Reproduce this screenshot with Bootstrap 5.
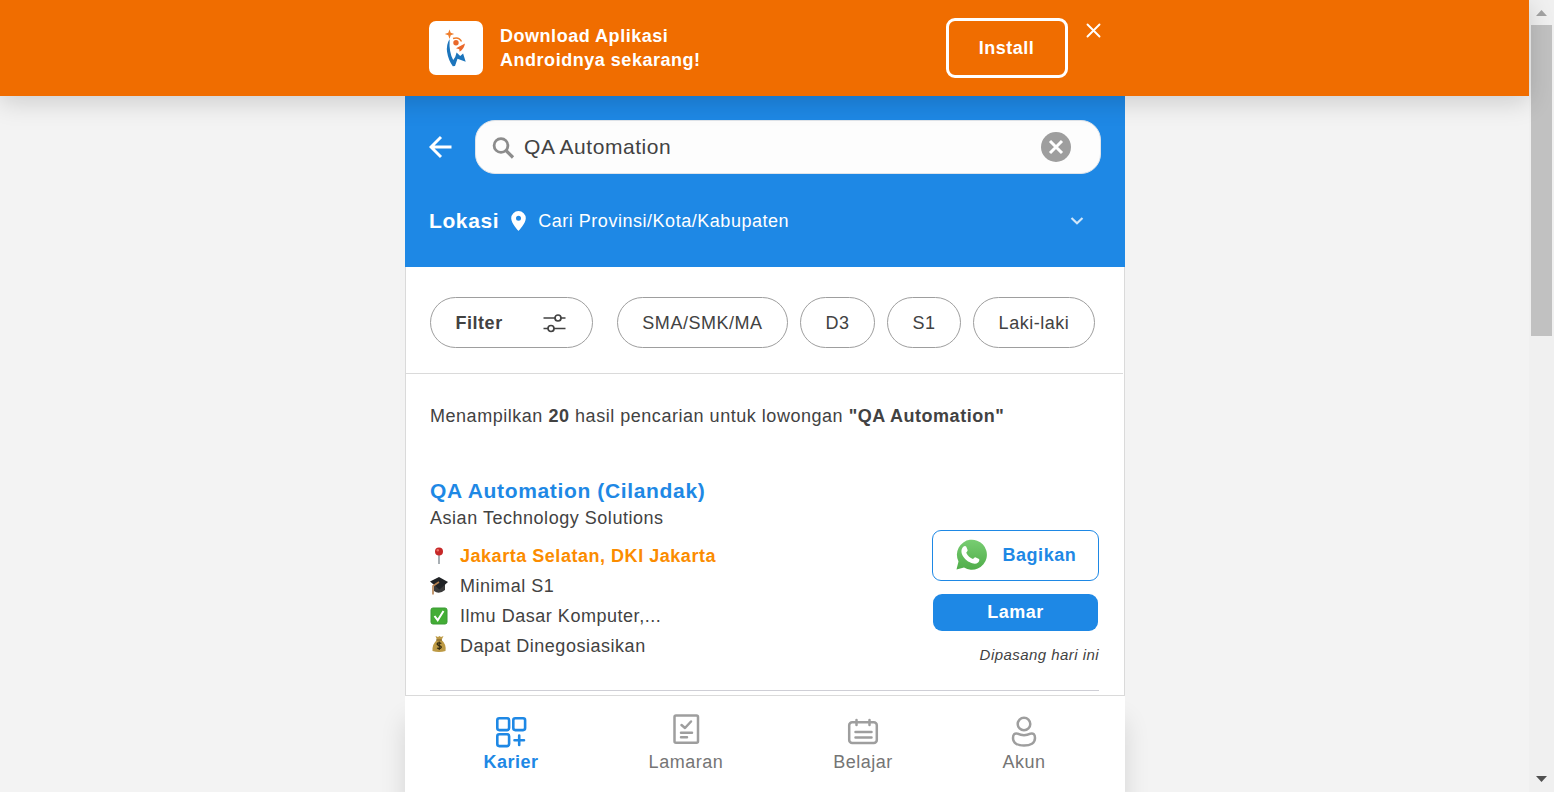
<!DOCTYPE html>
<html lang="id">
<head>
<meta charset="utf-8">
<meta name="viewport" content="width=device-width, initial-scale=1">
<title>QA Automation</title>
<link href="https://cdn.jsdelivr.net/npm/bootstrap@5.3.0/dist/css/bootstrap.min.css" rel="stylesheet">
<style>
  body { font-family: "Liberation Sans", Arial, sans-serif; font-size: 18px; line-height: 24px; letter-spacing: .53px; color: #424242; background: #f3f3f3; }
  svg { display: block; flex: none; }
  .viewport { height: 792px; }
  .promo { height: 96px; background: #f06d00; box-shadow: 0 6px 24px rgba(0,0,0,.16); z-index: 3; }
  .promo-inner, .phone { width: 720px; }
  .center-pad { padding-left: 1px; }
  .logo-tile { width: 54px; height: 54px; border-radius: 7px; margin: 21px 0 0 24px; }
  .promo-text { margin: 24px 0 0 17px; }
  .install { width: 122px; height: 60px; border: 3px solid #fff; border-radius: 9px; margin: 18px 0 0 auto; padding-right: 1px; }
  .close-x { margin: 22px 23px 0 17px; }
  .hero { height: 171px; background: #1e88e5; padding: 24px 24px 0; }
  .search { width: 626px; height: 54px; border-radius: 20px; background: #fdfdfd; border: 1px solid #dfe4ea; padding: 0 29px 0 15px; margin-left: 23px; }
  .search-term { font-size: 21px; letter-spacing: .55px; margin-left: 9px; }
  .search-term { color: #424242; }
  .place { height: 24px; margin-top: 35px; }
  .place-label { font-size: 21px; letter-spacing: .6px; }
  .place-pin { margin: 0 12px; }
  .place-caret { margin-right: 17px; }
  .sheet { height: 429px; border: 1px solid #dadada; border-top: 0; background: #fff; }
  .filters { height: 107px; padding: 30px 0 0 24px; border-bottom: 1px solid #dadada; margin-right: 1px; }
  .pill { height: 51px; border: 1px solid #9e9e9e; border-radius: 26px; margin-right: 12px; }
  .results { padding: 30px 25px 0 24px; }
  .job { margin-top: 50px; height: 213px; border-bottom: 1px solid #cfcfd6; }
  .job-title { font-size: 21px; line-height: 26px; color: #1e88e5; letter-spacing: .65px; }
  .fact { height: 30px; gap: 12px; }
  .orange { color: #fb8c00; }
  .share { width: 167px; height: 51px; border: 1px solid #1e88e5; border-radius: 9px; color: #1e88e5; padding: 0 0 2px 20px; margin-top: 52px; }
  .apply { width: 165px; height: 37px; border-radius: 9px; background: #1e88e5; margin: 13px 1px 0 0; padding-bottom: 2px; }
  .posted { font-size: 15px; letter-spacing: .45px; margin-top: 12px; }
  .tabs { height: 96px; background: #fff; color: #757575; box-shadow: 0 24px 24px rgba(0,0,0,.12); z-index: 2; padding-top: 16px; }
  .tab { line-height: 24px; }
  .tab svg { height: 38px; margin-left: -1px; }
  .scroller { width: 25px; background: #f0f0f0; padding: 0 2px 0 2px; }
  .arrow { height: 25px; }
  .thumb { height: 311px; background: #c1c1c1; }
</style>
</head>
<body class="overflow-hidden">
<div class="viewport d-flex">
  <div class="flex-grow-1 d-flex flex-column">
    <header class="promo center-pad d-flex justify-content-center position-relative">
      <div class="promo-inner d-flex align-items-start text-white fw-bold">
        <div class="logo-tile bg-white">
          <svg width="54" height="54" viewBox="0 0 54 54">
            <path d="M20.500 8.500l1.200 3.200 3.500 1.300-3.500 1.300-1.200 3.700-1.200-3.700-3.500-1.300 3.500-1.300z" fill="#ef7d2b"/>
            <path d="M24 17.500q6-2 8.500 3" fill="none" stroke="#ef7d2b" stroke-width="1.500"/>
            <circle cx="27" cy="21.800" r="2.700" fill="#e9682c"/>
            <path d="M36 22.500l-9 4.800 3.300.9.300 2.600q4.400-2.500 5.400-8.300z" fill="#e9682c"/>
            <path d="M20.300 18.500q-3.200 5.500-2.200 12.500 1.200 8 5.700 14.300l2.200-.4 2.500-7.200 8.200 3-2.600-8.200-2.900 2.500-3.600-3.500q-1 5-3.400 7.500-4.300-7.500-3.600-20.500z" fill="#1c75bc"/>
          </svg>
        </div>
        <div class="promo-text">Download Aplikasi<br>Androidnya sekarang!</div>
        <div class="install d-flex align-items-center justify-content-center">Install</div>
        <svg class="close-x" width="17" height="17" viewBox="0 0 17 17" stroke="#fff" stroke-width="1.900" stroke-linecap="round"><path d="M2.500 2.500l12 12M14.500 2.500l-12 12"/></svg>
      </div>
    </header>
    <main class="center-pad d-flex justify-content-center">
      <div class="phone">
        <section class="hero text-white">
          <div class="d-flex align-items-center">
            <svg width="23" height="24" viewBox="0 0 23 24" fill="none" stroke="#fff" stroke-width="2.900"><path d="M22.500 12H2M12 2L2 12l10 10"/></svg>
            <div class="search d-flex align-items-center">
              <svg width="24" height="24" viewBox="0 0 24 24" fill="none" stroke="#8c8c8c"><circle cx="10" cy="10.500" r="6.900" stroke-width="2.800"/><path d="M15 15.500l7 7" stroke-width="3.200"/></svg>
              <span class="search-term">QA Automation</span>
              <svg class="ms-auto" width="30" height="30" viewBox="0 0 30 30"><circle cx="15" cy="15" r="15" fill="#9e9e9e"/><path d="M9 9l12 12M21 9L9 21" stroke="#fff" stroke-width="3"/></svg>
            </div>
          </div>
          <div class="place d-flex align-items-center">
            <span class="place-label fw-bold">Lokasi</span>
            <svg class="place-pin" width="15" height="20" viewBox="0 0 15 20"><path d="M7.500 0A7.300 7.300 0 0 0 .2 7.300C.2 12.500 7.500 20 7.500 20s7.300-7.500 7.300-12.700A7.300 7.300 0 0 0 7.500 0zm0 4.800a2.500 2.500 0 1 1 0 5 2.500 2.500 0 0 1 0-5z" fill="#fff" fill-rule="evenodd"/></svg>
            <span>Cari Provinsi/Kota/Kabupaten</span>
            <svg class="place-caret ms-auto" width="14" height="10" viewBox="0 0 14 10" fill="none" stroke="#cfe6fa" stroke-width="2.200"><path d="M1.500 2l5.500 5.200L12.500 2"/></svg>
          </div>
        </section>
        <section class="sheet">
          <div class="filters d-flex">
            <div class="pill d-flex align-items-center fw-bold" style="width:163px;margin-right:24px;padding-left:24.5px">Filter
              <svg style="margin-left:40.500px" width="23" height="20" viewBox="0 0 23 20" fill="none" stroke="#424242" stroke-width="1.700"><path d="M.5 5h11.500M18 5h4.500M.5 15.500H5M11 15.500h11.500"/><circle cx="15" cy="5" r="3"/><circle cx="8" cy="15.500" r="3"/></svg>
            </div>
            <div class="pill d-flex align-items-center justify-content-center" style="width:171px">SMA/SMK/MA</div>
            <div class="pill d-flex align-items-center justify-content-center" style="width:75px">D3</div>
            <div class="pill d-flex align-items-center justify-content-center" style="width:74px">S1</div>
            <div class="pill d-flex align-items-center justify-content-center" style="width:122px">Laki-laki</div>
          </div>
          <div class="results">
            <div class="text-nowrap">Menampilkan <b>20</b> hasil pencarian untuk lowongan <b>"QA Automation"</b></div>
            <article class="job d-flex justify-content-between">
              <div>
                <div class="job-title fw-bold">QA Automation (Cilandak)</div>
                <div style="line-height:28px">Asian Technology Solutions</div>
                <div style="margin-top:9px">
                  <div class="fact d-flex align-items-center orange fw-bold">
                    <svg width="18" height="18" viewBox="0 0 18 18"><path d="M9 6v11" stroke="#8c949b" stroke-width="1.500"/><circle cx="9" cy="4.500" r="4" fill="#c62828"/><circle cx="7.800" cy="3.200" r="1.200" fill="#ef7065"/></svg>Jakarta Selatan, DKI Jakarta</div>
                  <div class="fact d-flex align-items-center">
                    <svg width="18" height="18" viewBox="0 0 18 18"><path d="M4 7v7q5 4 11-1V7z" fill="#3a3a3a"/><path d="M9 0l9 5-8.500 7.500L0 4.500z" fill="#202326"/><path d="M9 5L3 9v8.500" fill="none" stroke="#b58150" stroke-width="1.600"/></svg>Minimal S1</div>
                  <div class="fact d-flex align-items-center">
                    <svg width="18" height="18" viewBox="0 0 18 18"><rect x="1" y="1" width="16" height="16" rx="2" fill="#43ad35" stroke="#3a9a34"/><path d="M4.500 9l3.200 4.200L13.500 4" fill="none" stroke="#fff" stroke-width="2"/></svg>Ilmu Dasar Komputer,...</div>
                  <div class="fact d-flex align-items-center">
                    <svg style="margin-top:-4px" width="18" height="18" viewBox="0 0 18 18"><path d="M5.500 1l2.500 1 1.500-1L11 2l2.500-1-2 4q5 4 4 11-6.500 2-13 0Q2 9 7 5z" fill="#bd9a45"/><path d="M6 5h6" stroke="#765b20"/><path d="M11.300 8.500q-2-1.300-3.800-.4-1 1.300.8 2.200 3 .5 3 2-1 2.200-4.300.7M9.200 6.500v8.500" fill="none" stroke="#31290f" stroke-width="1.200"/></svg>Dapat Dinegosiasikan</div>
                </div>
              </div>
              <div class="d-flex flex-column align-items-end">
                <div class="share fw-bold d-flex align-items-center">
                  <svg width="34" height="34" viewBox="0 0 34 34">
                    <defs><linearGradient id="leaf" x2="0" y2="1"><stop stop-color="#78cd72"/><stop offset="1" stop-color="#50ad4a"/></linearGradient></defs>
                    <path d="M3.500 31.500l2-8A15 15 0 1 1 11 29.500z" fill="url(#leaf)"/>
                    <path d="M10.600 8.500c.8-.7 2.200-.8 2.700.3l1.300 3.100c.3.700-.7 2-1.400 2.800 1.700 3.300 3.800 5 6.800 6.300.8-.8 1.500-2 2.300-1.800l3.700 1.800c.8.500.1 2.700-.9 3.600-2.200 1.900-5.300 1.400-8.700-.5-3.300-1.900-7-5.700-7.800-9.200-.5-2.500.2-4.800 2-6.400z" fill="#fff"/>
                  </svg><span style="margin-left:15.500px">Bagikan</span></div>
                <div class="apply text-white fw-bold d-flex align-items-center justify-content-center">Lamar</div>
                <div class="posted fst-italic">Dipasang hari ini</div>
              </div>
            </article>
          </div>
        </section>
        <nav class="tabs d-flex position-relative">
          <div class="tab fw-bold d-flex flex-column align-items-center" style="margin-left:78px;width:56px;color:#1e88e5">
            <svg width="32" viewBox="0 0 32 38" fill="none" stroke="#1e88e5" stroke-width="2.600" stroke-linecap="round"><rect x="2.300" y="6.300" width="11.800" height="11.800" rx="2"/><rect x="18.300" y="6.300" width="11.800" height="11.800" rx="2"/><rect x="2.300" y="22.300" width="11.800" height="11.800" rx="2"/><path d="M19.500 28.200h9.500M24.200 23.500v9.500"/></svg>Karier</div>
          <div class="tab d-flex flex-column align-items-center" style="margin-left:109px;width:76px">
            <svg width="28" viewBox="0 0 28 38" fill="none" stroke="#9e9e9e" stroke-width="2.500" stroke-linecap="round" stroke-linejoin="round"><rect x="2.500" y="3.500" width="23.500" height="27.200" rx="1.500"/><path d="M9.500 13l3.500 3 6-6.500M9 20.700h11M9 25.200h6"/></svg>Lamaran</div>
          <div class="tab d-flex flex-column align-items-center" style="margin-left:108px;width:62px">
            <svg width="32" viewBox="0 0 32 38" fill="none" stroke="#9e9e9e" stroke-width="2.500" stroke-linecap="round"><rect x="2.200" y="10.300" width="27.600" height="20.700" rx="3"/><path d="M9.500 8v5M22.500 8v5M8.500 20h16M8.500 25.500h16"/></svg>Belajar</div>
          <div class="tab d-flex flex-column align-items-center" style="margin-left:107px;width:46px">
            <svg width="26" viewBox="0 0 26 38" fill="none" stroke="#9e9e9e" stroke-width="2.500"><circle cx="13" cy="12" r="6.300"/><path d="M6.500 21.600q6.500 3.200 13 0c2.800-.7 4.500.9 4.500 4.400 0 5-4.500 7.600-11 7.600S2 31 2 26c0-3.500 1.700-5.100 4.500-4.400z"/></svg>Akun</div>
        </nav>
      </div>
    </main>
  </div>
  <div class="scroller d-flex flex-column">
    <div class="arrow"><svg width="21" height="25" viewBox="0 0 21 25"><path d="M5 16l5.500-6 5.500 6z" fill="#a3a3a3"/></svg></div>
    <div class="thumb"></div>
    <div class="arrow mt-auto"><svg width="21" height="25" viewBox="0 0 21 25"><path d="M5 9l5.500 6L16 9z" fill="#505050"/></svg></div>
  </div>
</div>
<script src="https://cdn.jsdelivr.net/npm/bootstrap@5.3.0/dist/js/bootstrap.bundle.min.js"></script>
</body>
</html>
